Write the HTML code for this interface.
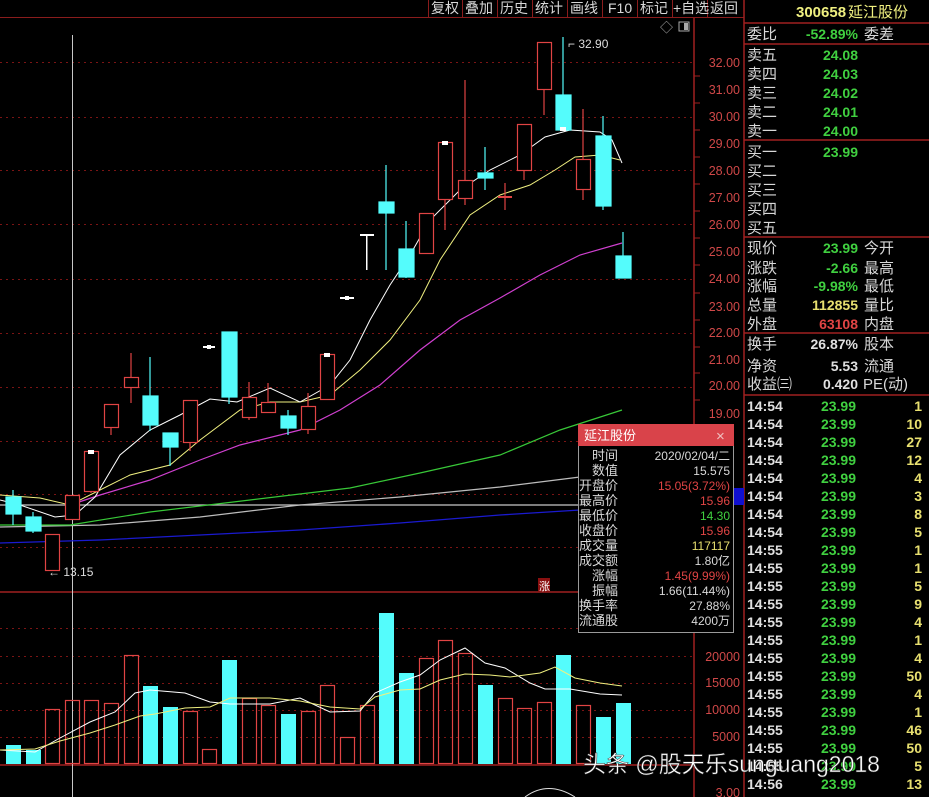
<!DOCTYPE html>
<html><head><meta charset="utf-8">
<style>
html,body{margin:0;padding:0;background:#000;width:929px;height:797px;overflow:hidden}
svg{display:block}
text{font-family:"Liberation Sans","Noto Sans CJK SC",sans-serif}
.ax{fill:#d04848;font-size:12.5px;text-anchor:end}
.lb{fill:#d8d8d8;font-size:15px}
.g{fill:#40d040;font-size:14px;font-weight:bold;text-anchor:end}
.y{fill:#e8e070;font-size:14px;font-weight:bold;text-anchor:end}
.w{fill:#e0e0e0;font-size:14px;font-weight:bold;text-anchor:end}
.tm{fill:#e0e0e0;font-size:14px;font-weight:bold}
.tl{fill:#d8d8d8;font-size:13px;text-anchor:end}
.tv{font-size:12px;text-anchor:end}
</style></head><body>
<svg width="929" height="797" viewBox="0 0 929 797" xmlns="http://www.w3.org/2000/svg">
<rect width="929" height="797" fill="#000"/>
<g stroke="#8a1c1c" stroke-width="1">
<line x1="0" y1="17.5" x2="744" y2="17.5"/>
<line x1="428.5" y1="0" x2="428.5" y2="17"/><line x1="462.5" y1="0" x2="462.5" y2="17"/><line x1="497.5" y1="0" x2="497.5" y2="17"/><line x1="532.5" y1="0" x2="532.5" y2="17"/><line x1="567.5" y1="0" x2="567.5" y2="17"/><line x1="602.5" y1="0" x2="602.5" y2="17"/><line x1="637.5" y1="0" x2="637.5" y2="17"/><line x1="672.5" y1="0" x2="672.5" y2="17"/><line x1="707.5" y1="0" x2="707.5" y2="17"/>
</g>
<g fill="#d8d8d8" font-size="14">
<text x="431" y="13">复权</text><text x="465" y="13">叠加</text><text x="500" y="13">历史</text><text x="535" y="13">统计</text><text x="570" y="13">画线</text><text x="608" y="13">F10</text><text x="640" y="13">标记</text><text x="673" y="13">+自选</text><text x="710" y="13">返回</text>
</g>
<g stroke="#7a1414" stroke-dasharray="2,4" stroke-width="1">
<line x1="0" y1="62.5" x2="694" y2="62.5"/><line x1="0" y1="117.5" x2="694" y2="117.5"/><line x1="0" y1="170.5" x2="694" y2="170.5"/><line x1="0" y1="224.5" x2="694" y2="224.5"/><line x1="0" y1="279.5" x2="694" y2="279.5"/><line x1="0" y1="333.5" x2="694" y2="333.5"/><line x1="0" y1="387.5" x2="694" y2="387.5"/><line x1="0" y1="441.5" x2="694" y2="441.5"/><line x1="0" y1="494.5" x2="694" y2="494.5"/><line x1="0" y1="547.5" x2="694" y2="547.5"/>
<line x1="0" y1="628.5" x2="694" y2="628.5"/><line x1="0" y1="656.5" x2="694" y2="656.5"/><line x1="0" y1="683.5" x2="694" y2="683.5"/><line x1="0" y1="710.5" x2="694" y2="710.5"/><line x1="0" y1="737.5" x2="694" y2="737.5"/>
</g>
<g stroke="#a02020" stroke-width="1.5">
<line x1="694" y1="18" x2="694" y2="797"/>
<line x1="744" y1="0" x2="744" y2="797"/>
<line x1="0" y1="592" x2="694" y2="592"/>
<line x1="0" y1="765" x2="694" y2="765"/>
</g>
<g stroke="#a02020">
<line x1="694" y1="76" x2="700" y2="76"/><line x1="694" y1="103" x2="700" y2="103"/><line x1="694" y1="130" x2="700" y2="130"/><line x1="694" y1="157" x2="700" y2="157"/><line x1="694" y1="184" x2="700" y2="184"/><line x1="694" y1="211" x2="700" y2="211"/><line x1="694" y1="238" x2="700" y2="238"/><line x1="694" y1="265" x2="700" y2="265"/><line x1="694" y1="293" x2="700" y2="293"/><line x1="694" y1="320" x2="700" y2="320"/><line x1="694" y1="347" x2="700" y2="347"/><line x1="694" y1="373" x2="700" y2="373"/><line x1="694" y1="400" x2="700" y2="400"/>
</g>
<g class="ax">
<text x="740" y="67" class="ax">32.00</text><text x="740" y="94" class="ax">31.00</text><text x="740" y="121" class="ax">30.00</text><text x="740" y="148" class="ax">29.00</text><text x="740" y="175" class="ax">28.00</text><text x="740" y="202" class="ax">27.00</text><text x="740" y="229" class="ax">26.00</text><text x="740" y="256" class="ax">25.00</text><text x="740" y="283" class="ax">24.00</text><text x="740" y="311" class="ax">23.00</text><text x="740" y="337" class="ax">22.00</text><text x="740" y="364" class="ax">21.00</text><text x="740" y="390" class="ax">20.00</text><text x="740" y="418" class="ax">19.00</text>
<text x="740" y="661" class="ax">20000</text><text x="740" y="687" class="ax">15000</text><text x="740" y="714" class="ax">10000</text><text x="740" y="741" class="ax">5000</text>
</g>
<rect x="733" y="488" width="11" height="17" fill="#1010d0"/>
<line x1="72.5" y1="35" x2="72.5" y2="797" stroke="#c8c8c8"/>
<polyline fill="none" stroke="#1a1ad0" stroke-width="1.3" points="0,543 100,540 200,535 300,530 400,523 500,515 580,510 694,500"/>
<polyline fill="none" stroke="#c8c8c8" stroke-width="1.2" points="0,505 694,505"/>
<polyline fill="none" stroke="#bdbdbd" stroke-width="1.2" points="0,527 100,525 200,517 300,505 400,497 500,487 580,477 622,470"/>
<polyline fill="none" stroke="#38c838" stroke-width="1.2" points="0,525 70,525 150,512 250,500 350,488 420,473 500,455 560,430 622,410"/>
<polyline fill="none" stroke="#d040d0" stroke-width="1.2" points="70,505 100,495 150,480 200,460 240,445 300,430 340,410 380,385 420,350 460,320 500,298 540,275 580,255 622,243"/>
<polyline fill="none" stroke="#f0f080" stroke-width="1" points="0,495 40,498 70,505 100,490 130,475 170,465 200,440 240,410 270,402 300,402 330,395 360,370 390,340 420,300 440,260 470,215 500,195 530,185 555,170 575,157 600,155 620,160"/>
<polyline fill="none" stroke="#ffffff" stroke-width="1" points="0,500 20,505 55,517 75,515 95,497 120,455 150,430 180,415 210,399 237,402 270,388 300,402 330,385 350,360 370,320 390,285 410,255 430,220 460,190 490,170 520,155 545,137 570,130 600,132 612,140 622,163"/>
<g stroke="#e04444" stroke-width="1.2" fill="#000">
<line x1="52" y1="534" x2="52" y2="571"/><rect x="45.5" y="534.5" width="14" height="36"/>
<rect x="65.5" y="495.5" width="14" height="24"/>
<line x1="91" y1="451" x2="91" y2="493"/><rect x="84.5" y="451.5" width="14" height="40"/>
<line x1="111" y1="404" x2="111" y2="435"/><rect x="104.5" y="404.5" width="14" height="23"/>
<line x1="131" y1="353" x2="131" y2="403"/><rect x="124.5" y="377.5" width="14" height="10"/>
<line x1="190" y1="400" x2="190" y2="451"/><rect x="183.5" y="400.5" width="14" height="42"/>
<line x1="249" y1="382" x2="249" y2="420"/><rect x="242.5" y="397.5" width="14" height="20"/>
<line x1="268" y1="383" x2="268" y2="412"/><rect x="261.5" y="402.5" width="14" height="10"/>
<line x1="308" y1="393" x2="308" y2="434"/><rect x="301.5" y="406.5" width="14" height="23"/>
<rect x="320.5" y="354.5" width="14" height="45"/>
<rect x="419.5" y="213.5" width="14" height="40"/>
<line x1="445" y1="142" x2="445" y2="230"/><rect x="438.5" y="142.5" width="14" height="57"/>
<line x1="465" y1="80" x2="465" y2="205"/><rect x="458.5" y="180.5" width="14" height="18"/>
<line x1="505" y1="183" x2="505" y2="210"/><line x1="498" y1="197" x2="512" y2="197" stroke-width="2"/>
<line x1="524" y1="124" x2="524" y2="180"/><rect x="517.5" y="124.5" width="14" height="46"/>
<line x1="544" y1="42" x2="544" y2="115"/><rect x="537.5" y="42.5" width="14" height="47"/>
<line x1="583" y1="109" x2="583" y2="200"/><rect x="576.5" y="159.5" width="14" height="30"/>
</g>
<g stroke="#54fcfc" stroke-width="1.2" fill="#54fcfc">
<line x1="13" y1="490" x2="13" y2="525"/><rect x="6" y="497" width="15" height="17"/>
<line x1="33" y1="512" x2="33" y2="533"/><rect x="26" y="517" width="15" height="14"/>
<line x1="150" y1="357" x2="150" y2="431"/><rect x="143" y="396" width="15" height="29"/>
<line x1="170" y1="433" x2="170" y2="466"/><rect x="163" y="433" width="15" height="14"/>
<line x1="229" y1="332" x2="229" y2="404"/><rect x="222" y="332" width="15" height="65"/>
<line x1="288" y1="410" x2="288" y2="435"/><rect x="281" y="416" width="15" height="12"/>
<line x1="386" y1="165" x2="386" y2="270"/><rect x="379" y="202" width="15" height="11"/>
<line x1="406" y1="221" x2="406" y2="278"/><rect x="399" y="249" width="15" height="28"/>
<line x1="485" y1="147" x2="485" y2="190"/><rect x="478" y="173" width="15" height="5"/>
<line x1="563" y1="37" x2="563" y2="130"/><rect x="556" y="95" width="15" height="35"/>
<line x1="603" y1="116" x2="603" y2="210"/><rect x="596" y="136" width="15" height="70"/>
<line x1="623" y1="232" x2="623" y2="256"/><rect x="616" y="256" width="15" height="22"/>
</g>
<g fill="#fff">
<rect x="88" y="450" width="6" height="4"/><rect x="324" y="353" width="6" height="4"/><rect x="442" y="141" width="6" height="4"/><rect x="560" y="127" width="6" height="4"/>
<rect x="203" y="346" width="12" height="2"/><rect x="207" y="345" width="4" height="4"/>
<rect x="340" y="297" width="14" height="2"/><rect x="345" y="296" width="4" height="4"/>
<rect x="360" y="234" width="14" height="2"/><rect x="366" y="234" width="1.5" height="36"/>
</g>
<text x="568" y="48" fill="#ddd" font-size="12">⌐ 32.90</text>
<text x="48" y="576" fill="#ddd" font-size="12">← 13.15</text>
<text x="660" y="32" fill="#aaa" font-size="13">◇</text>
<rect x="679" y="22" width="10" height="9" fill="none" stroke="#aaa"/><rect x="684" y="23" width="4" height="7" fill="#aaa"/>
<rect x="538" y="578" width="12" height="14" fill="#8a1010"/><text x="539" y="590" fill="#fff" font-size="11">涨</text>
<g fill="#54fcfc">
<rect x="6" y="745" width="15" height="19"/><rect x="26" y="750" width="15" height="14"/><rect x="143" y="686" width="15" height="78"/><rect x="163" y="707" width="15" height="57"/><rect x="222" y="660" width="15" height="104"/><rect x="281" y="714" width="15" height="50"/><rect x="379" y="613" width="15" height="151"/><rect x="399" y="673" width="15" height="91"/><rect x="478" y="685" width="15" height="79"/><rect x="556" y="655" width="15" height="109"/><rect x="596" y="717" width="15" height="47"/><rect x="616" y="703" width="15" height="61"/>
</g>
<g fill="none" stroke="#e04444" stroke-width="1.2">
<rect x="45.5" y="709.5" width="14" height="54"/><rect x="65.5" y="700.5" width="14" height="63"/><rect x="84.5" y="700.5" width="14" height="63"/><rect x="104.5" y="703.5" width="14" height="60"/><rect x="124.5" y="655.5" width="14" height="108"/><rect x="183.5" y="711.5" width="14" height="52"/><rect x="202.5" y="749.5" width="14" height="14"/><rect x="242.5" y="698.5" width="14" height="65"/><rect x="261.5" y="705.5" width="14" height="58"/><rect x="301.5" y="711.5" width="14" height="52"/><rect x="320.5" y="685.5" width="14" height="78"/><rect x="340.5" y="737.5" width="14" height="26"/><rect x="360.5" y="705.5" width="14" height="58"/><rect x="419.5" y="658.5" width="14" height="105"/><rect x="438.5" y="640.5" width="14" height="123"/><rect x="458.5" y="653.5" width="14" height="110"/><rect x="498.5" y="698.5" width="14" height="65"/><rect x="517.5" y="708.5" width="14" height="55"/><rect x="537.5" y="702.5" width="14" height="61"/><rect x="576.5" y="705.5" width="14" height="58"/>
</g>
<polyline fill="none" stroke="#fff" stroke-width="1" points="0,750 35,752 60,738 90,722 115,712 135,693 150,690 185,693 210,702 230,704 270,704 300,698 330,712 360,711 375,693 400,682 420,675 440,660 465,648 485,663 505,668 530,683 545,689 570,689 600,694 622,695"/>
<polyline fill="none" stroke="#f0f080" stroke-width="1" points="0,750 35,749 60,741 90,733 115,725 140,716 155,714 185,708 210,707 230,698 270,698 300,701 330,707 360,709 375,697 400,690 420,689 440,680 465,674 490,675 510,677 540,673 555,667 575,678 600,683 622,686"/>
<path d="M525,797 Q548,780 575,797" fill="none" stroke="#ddd"/>
<text x="740" y="797" class="ax">3.00</text>
<rect x="578.5" y="424.5" width="155" height="208" fill="#000" stroke="#9a9a9a"/>
<rect x="578" y="424" width="156" height="22" fill="#d9434a"/>
<text x="584" y="440" fill="#fff" font-size="13">延江股份</text>
<text x="716" y="441" fill="#f0c0c0" font-size="15">×</text>
<g class="tl">
<text x="618" y="460" class="tl">时间</text><text x="618" y="475" class="tl">数值</text><text x="618" y="490" class="tl">开盘价</text><text x="618" y="505" class="tl">最高价</text><text x="618" y="520" class="tl">最低价</text><text x="618" y="535" class="tl">收盘价</text><text x="618" y="550" class="tl">成交量</text><text x="618" y="565" class="tl">成交额</text><text x="618" y="580" class="tl">涨幅</text><text x="618" y="595" class="tl">振幅</text><text x="618" y="610" class="tl">换手率</text><text x="618" y="625" class="tl">流通股</text>
</g>
<text x="730" y="460" class="tv" fill="#d8d8d8">2020/02/04/二</text>
<text x="730" y="475" class="tv" fill="#d8d8d8">15.575</text>
<text x="730" y="490" class="tv" fill="#e04444">15.05(3.72%)</text>
<text x="730" y="505" class="tv" fill="#e04444">15.96</text>
<text x="730" y="520" class="tv" fill="#40d040">14.30</text>
<text x="730" y="535" class="tv" fill="#e04444">15.96</text>
<text x="730" y="550" class="tv" fill="#e8e070">117117</text>
<text x="730" y="565" class="tv" fill="#d8d8d8">1.80亿</text>
<text x="730" y="580" class="tv" fill="#e04444">1.45(9.99%)</text>
<text x="730" y="595" class="tv" fill="#d8d8d8">1.66(11.44%)</text>
<text x="730" y="610" class="tv" fill="#d8d8d8">27.88%</text>
<text x="730" y="625" class="tv" fill="#d8d8d8">4200万</text>
<g stroke="#a02020" stroke-width="1.5">
<line x1="744" y1="23" x2="929" y2="23"/><line x1="744" y1="44" x2="929" y2="44"/><line x1="744" y1="140" x2="929" y2="140"/><line x1="744" y1="237" x2="929" y2="237"/><line x1="744" y1="333" x2="929" y2="333"/><line x1="744" y1="395" x2="929" y2="395"/>
</g>
<text x="796" y="17" fill="#f0f080" font-size="15" font-weight="bold">300658</text>
<text x="848" y="17" fill="#f0f080" font-size="15">延江股份</text>
<g class="lb">
<text x="747" y="39" class="lb">委比</text><text x="864" y="39" class="lb">委差</text>
<text x="747" y="60" class="lb">卖五</text><text x="747" y="79" class="lb">卖四</text><text x="747" y="98" class="lb">卖三</text><text x="747" y="117" class="lb">卖二</text><text x="747" y="136" class="lb">卖一</text>
<text x="747" y="157" class="lb">买一</text><text x="747" y="176" class="lb">买二</text><text x="747" y="195" class="lb">买三</text><text x="747" y="214" class="lb">买四</text><text x="747" y="233" class="lb">买五</text>
<text x="747" y="253" class="lb">现价</text><text x="747" y="273" class="lb">涨跌</text><text x="747" y="291" class="lb">涨幅</text><text x="747" y="310" class="lb">总量</text><text x="747" y="329" class="lb">外盘</text>
<text x="864" y="253" class="lb">今开</text><text x="864" y="273" class="lb">最高</text><text x="864" y="291" class="lb">最低</text><text x="864" y="310" class="lb">量比</text><text x="864" y="329" class="lb">内盘</text>
<text x="747" y="349" class="lb">换手</text><text x="747" y="371" class="lb">净资</text><text x="747" y="389" class="lb">收益㈢</text>
<text x="864" y="349" class="lb">股本</text><text x="864" y="371" class="lb">流通</text><text x="863" y="389" class="lb">PE(动)</text>
</g>
<text x="858" y="39" class="g">-52.89%</text>
<text x="858" y="60" class="g">24.08</text><text x="858" y="79" class="g">24.03</text><text x="858" y="98" class="g">24.02</text><text x="858" y="117" class="g">24.01</text><text x="858" y="136" class="g">24.00</text><text x="858" y="157" class="g">23.99</text>
<text x="858" y="253" class="g">23.99</text><text x="858" y="273" class="g">-2.66</text><text x="858" y="291" class="g">-9.98%</text>
<text x="858" y="310" class="y">112855</text><text x="858" y="329" class="y" style="fill:#e04444">63108</text>
<text x="858" y="349" class="w">26.87%</text><text x="858" y="371" class="w">5.53</text><text x="858" y="389" class="w">0.420</text>
<g class="tm">
<text x="747" y="411" class="tm">14:54</text><text x="747" y="429" class="tm">14:54</text><text x="747" y="447" class="tm">14:54</text><text x="747" y="465" class="tm">14:54</text><text x="747" y="483" class="tm">14:54</text><text x="747" y="501" class="tm">14:54</text><text x="747" y="519" class="tm">14:54</text><text x="747" y="537" class="tm">14:54</text>
<text x="747" y="555" class="tm">14:55</text><text x="747" y="573" class="tm">14:55</text><text x="747" y="591" class="tm">14:55</text><text x="747" y="609" class="tm">14:55</text><text x="747" y="627" class="tm">14:55</text><text x="747" y="645" class="tm">14:55</text><text x="747" y="663" class="tm">14:55</text><text x="747" y="681" class="tm">14:55</text><text x="747" y="699" class="tm">14:55</text><text x="747" y="717" class="tm">14:55</text><text x="747" y="735" class="tm">14:55</text><text x="747" y="753" class="tm">14:55</text><text x="747" y="771" class="tm">14:55</text><text x="747" y="789" class="tm">14:56</text>
</g>
<g class="g">
<text x="856" y="411" class="g">23.99</text><text x="856" y="429" class="g">23.99</text><text x="856" y="447" class="g">23.99</text><text x="856" y="465" class="g">23.99</text><text x="856" y="483" class="g">23.99</text><text x="856" y="501" class="g">23.99</text><text x="856" y="519" class="g">23.99</text><text x="856" y="537" class="g">23.99</text><text x="856" y="555" class="g">23.99</text><text x="856" y="573" class="g">23.99</text><text x="856" y="591" class="g">23.99</text><text x="856" y="609" class="g">23.99</text><text x="856" y="627" class="g">23.99</text><text x="856" y="645" class="g">23.99</text><text x="856" y="663" class="g">23.99</text><text x="856" y="681" class="g">23.99</text><text x="856" y="699" class="g">23.99</text><text x="856" y="717" class="g">23.99</text><text x="856" y="735" class="g">23.99</text><text x="856" y="753" class="g">23.99</text><text x="856" y="771" class="g">23.99</text><text x="856" y="789" class="g">23.99</text>
</g>
<g class="y">
<text x="922" y="411" class="y">1</text><text x="922" y="429" class="y">10</text><text x="922" y="447" class="y">27</text><text x="922" y="465" class="y">12</text><text x="922" y="483" class="y">4</text><text x="922" y="501" class="y">3</text><text x="922" y="519" class="y">8</text><text x="922" y="537" class="y">5</text><text x="922" y="555" class="y">1</text><text x="922" y="573" class="y">1</text><text x="922" y="591" class="y">5</text><text x="922" y="609" class="y">9</text><text x="922" y="627" class="y">4</text><text x="922" y="645" class="y">1</text><text x="922" y="663" class="y">4</text><text x="922" y="681" class="y">50</text><text x="922" y="699" class="y">4</text><text x="922" y="717" class="y">1</text><text x="922" y="735" class="y">46</text><text x="922" y="753" class="y">50</text><text x="922" y="771" class="y">5</text><text x="922" y="789" class="y">13</text>
</g>
<text x="583" y="772" fill="#ffffff" font-size="23" stroke="#333" stroke-width="0.5">头条 @股天乐sunguang2018</text>
</svg>
</body></html>
